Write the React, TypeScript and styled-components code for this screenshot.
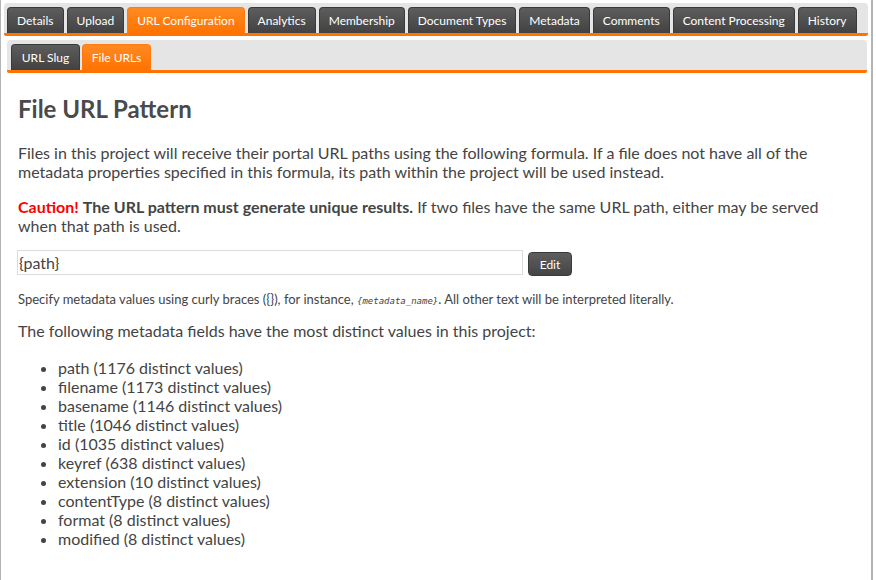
import React from "react";
import styled, { createGlobalStyle } from "styled-components";

const Global = createGlobalStyle`
  html, body { margin: 0; padding: 0; background: #fff; }
  body { font-family: Lato, "Open Sans", sans-serif; color: #444; }
`;

const Frame = styled.div`
  box-sizing: border-box;
  width: 873px;
  min-height: 580px;
  border-left: 1px solid #b4b4b4;
  border-right: 2px solid #b4b4b4;
  padding: 3px 3px 0 3px;
`;

const TabBar = styled.div<{ $sub?: boolean }>`
  display: flex;
  gap: ${(p) => (p.$sub ? "2px" : "3px")};
  background: #e5e5e5;
  border-radius: 4px 4px 2px 2px;
  padding: 4px ${(p) => (p.$sub ? "4px" : "3px")} 0;
  margin: ${(p) => (p.$sub ? "4px 1px 0 3px" : "0")};
  border-bottom: 3px solid #ff7300;
  height: 26px;
`;

const Tab = styled.div<{ $active?: boolean; $sub?: boolean }>`
  height: 26px;
  box-sizing: border-box;
  padding: 0 9px;
  width: ${(p) => (p.$sub ? "69px" : "auto")};
  display: flex;
  align-items: center;
  justify-content: center;
  font-size: 12px;
  color: #fff;
  border-radius: 4px 4px 0 0;
  border: 1px solid ${(p) => (p.$active ? "#ff7a10" : "#3a3a3a")};
  border-bottom: none;
  background: ${(p) =>
    p.$active
      ? "linear-gradient(#ff8a22, #ff7300)"
      : "linear-gradient(#5d5d5d, #424242)"};
  white-space: nowrap;
`;

const Content = styled.div`
  padding: 0 14px;
`;

const Heading = styled.h1`
  font-size: 24px;
  font-weight: 700;
  color: #4a4a4a;
  margin: 21px 0 0;
  line-height: 30px;
`;

const Para = styled.p<{ $top: number }>`
  font-size: 16px;
  line-height: 19px;
  margin: ${(p) => p.$top}px 0 0;
  color: #444;
`;

const Caution = styled.span`
  color: #f00;
  font-weight: 700;
`;

const Strong = styled.span`
  font-weight: 700;
`;

const InputRow = styled.div`
  display: flex;
  align-items: flex-start;
  gap: 5px;
  margin-top: 15px;
`;

const PatternInput = styled.div`
  box-sizing: border-box;
  width: 506px;
  height: 25px;
  border: 1px solid #dcdcdc;
  font-size: 16px;
  color: #444;
  display: flex;
  align-items: center;
  padding-left: 1px;
  margin-left: -1px;
`;

const Button = styled.button`
  font-family: Lato, sans-serif;
  font-size: 12px;
  color: #fff;
  height: 24px;
  width: 44px;
  border-radius: 4px;
  border: 1px solid #3a3a3a;
  background: linear-gradient(#5e5e5e, #454545);
  padding: 0;
  margin-top: 2px;
`;

const Help = styled.p`
  font-size: 13px;
  line-height: 16px;
  margin: 15px 0 0;
  color: #444;
`;

const Code = styled.code`
  font-family: "DejaVu Sans Mono", monospace;
  font-size: 9px;
  font-style: italic;
`;

const List = styled.ul`
  margin: 18px 0 0;
  padding-left: 40px;
  font-size: 16px;
  line-height: 19px;
  color: #444;
`;

const tabs = [
  "Details",
  "Upload",
  "URL Configuration",
  "Analytics",
  "Membership",
  "Document Types",
  "Metadata",
  "Comments",
  "Content Processing",
  "History",
];

const fields = [
  "path (1176 distinct values)",
  "filename (1173 distinct values)",
  "basename (1146 distinct values)",
  "title (1046 distinct values)",
  "id (1035 distinct values)",
  "keyref (638 distinct values)",
  "extension (10 distinct values)",
  "contentType (8 distinct values)",
  "format (8 distinct values)",
  "modified (8 distinct values)",
];

export default function App() {
  return (
    <>
      <Global />
      <Frame>
        <TabBar>
          {tabs.map((t) => (
            <Tab key={t} $active={t === "URL Configuration"}>
              {t}
            </Tab>
          ))}
        </TabBar>
        <TabBar $sub>
          <Tab $sub>URL Slug</Tab>
          <Tab $sub $active>
            File URLs
          </Tab>
        </TabBar>
        <Content>
          <Heading>File URL Pattern</Heading>
          <Para $top={19}>
            Files in this project will receive their portal URL paths using the following
            formula. If a file does not have all of the metadata properties specified in this
            formula, its path within the project will be used instead.
          </Para>
          <Para $top={16}>
            <Caution>Caution!</Caution> <Strong>The URL pattern must generate unique results.</Strong>{" "}
            If two files have the same URL path, either may be served when that path is used.
          </Para>
          <InputRow>
            <PatternInput>{"{path}"}</PatternInput>
            <Button>Edit</Button>
          </InputRow>
          <Help>
            Specify metadata values using curly braces ({"{}"}), for instance,{" "}
            <Code>{"{metadata_name}"}</Code>. All other text will be interpreted literally.
          </Help>
          <Para $top={12}>
            The following metadata fields have the most distinct values in this project:
          </Para>
          <List>
            {fields.map((f) => (
              <li key={f}>{f}</li>
            ))}
          </List>
        </Content>
      </Frame>
    </>
  );
}
